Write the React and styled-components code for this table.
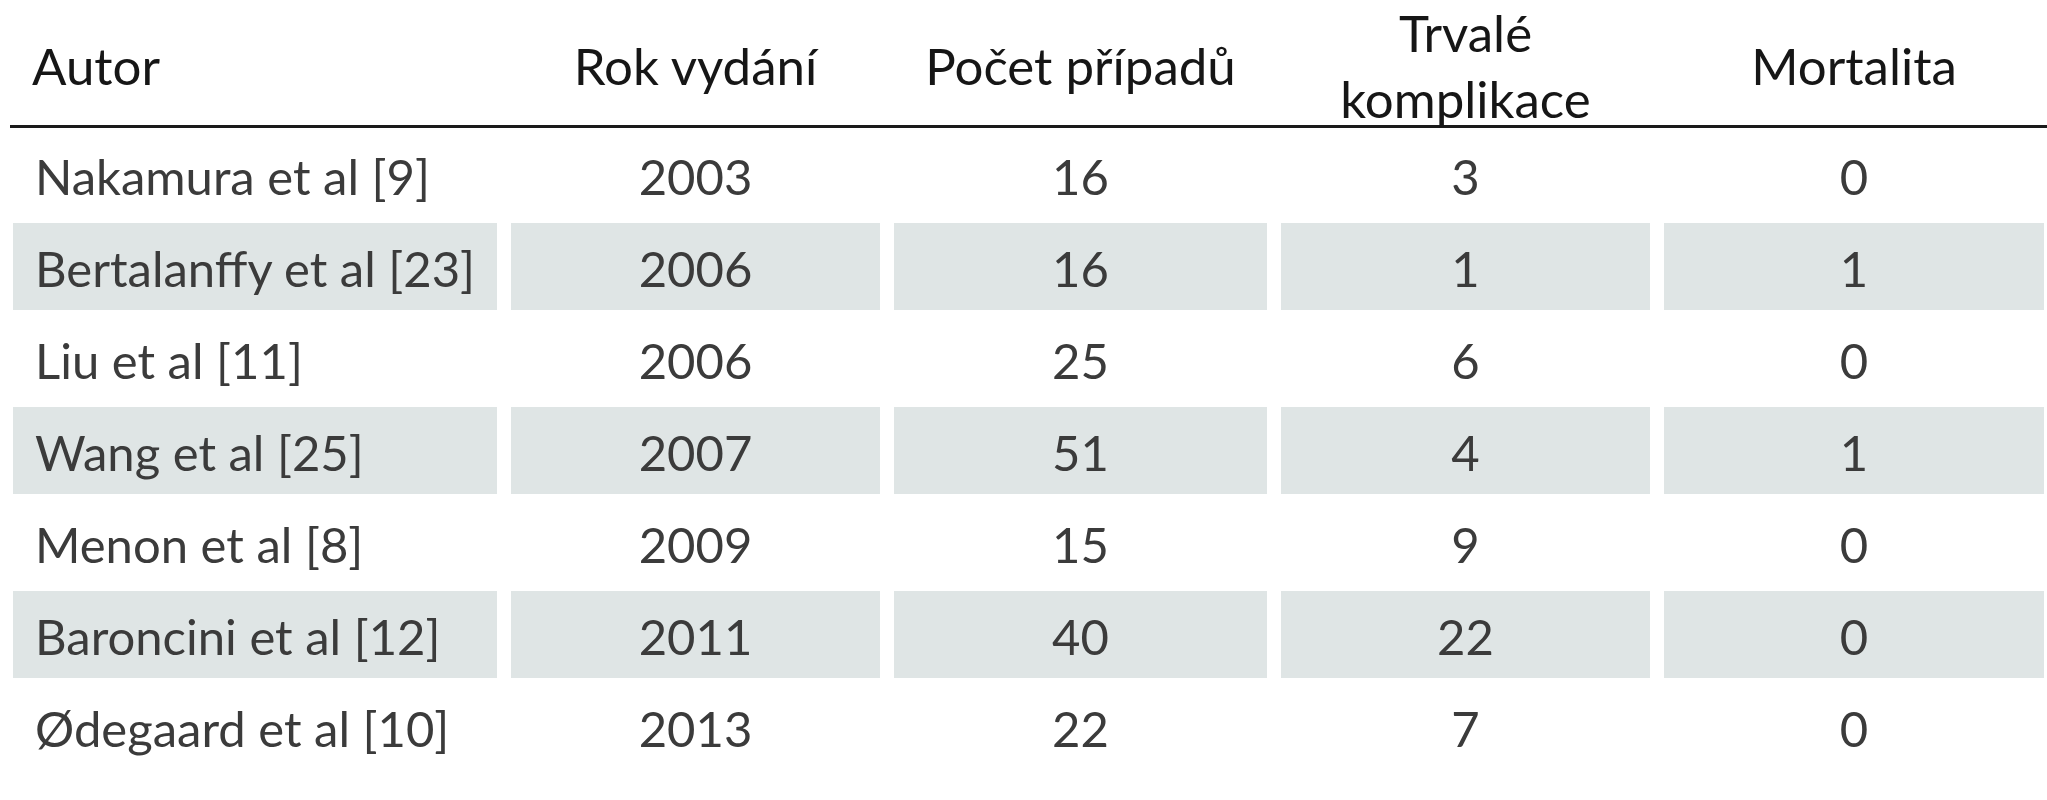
import React from 'react';
import styled, { createGlobalStyle } from 'styled-components';

const GlobalStyle = createGlobalStyle`
    body {
        margin: 0;
        background: #ffffff;
        font-family: Lato, "Open Sans", "Noto Sans", sans-serif;
    }
`;

const COLUMNS = '484px 369px 373px 369px 380px';

const Table = styled.div`
    margin-left: 10px;
    width: 2037px;
`;

const HeaderRow = styled.div`
    display: grid;
    grid-template-columns: ${COLUMNS};
    column-gap: 14px;
    height: 128px;
    padding: 0 0 8px 3px;
    box-sizing: border-box;
    border-bottom: 3px solid #1a1a1a;
`;

const HeaderCell = styled.div`
    display: flex;
    align-items: center;
    justify-content: ${props => props.left ? 'flex-start' : 'center'};
    padding-left: ${props => props.left ? '19px' : '0'};
    text-align: center;
    font-size: 51px;
    line-height: 66px;
    color: #161616;
`;

const Body = styled.div`
    display: flex;
    flex-direction: column;
    gap: 5px;
    padding: 3px 0 0 3px;
`;

const Row = styled.div`
    display: grid;
    grid-template-columns: ${COLUMNS};
    column-gap: 14px;
    height: 87px;
`;

const Cell = styled.div`
    display: flex;
    align-items: center;
    justify-content: ${props => props.left ? 'flex-start' : 'center'};
    padding-left: ${props => props.left ? '22px' : '0'};
    padding-top: 3px;
    box-sizing: border-box;
    background: ${props => props.shaded ? '#dfe5e5' : 'transparent'};
    font-size: 49px;
    line-height: 1.2;
    color: #3b3b3b;
`;

const rows = [
    ['Nakamura et al [9]', '2003', '16', '3', '0'],
    ['Bertalanffy et al [23]', '2006', '16', '1', '1'],
    ['Liu et al [11]', '2006', '25', '6', '0'],
    ['Wang et al [25]', '2007', '51', '4', '1'],
    ['Menon et al [8]', '2009', '15', '9', '0'],
    ['Baroncini et al [12]', '2011', '40', '22', '0'],
    ['Ødegaard et al [10]', '2013', '22', '7', '0'],
];

const App = () => {
    return (
        <>
            <GlobalStyle />
            <Table>
                <HeaderRow>
                    <HeaderCell left>Autor</HeaderCell>
                    <HeaderCell>Rok vydání</HeaderCell>
                    <HeaderCell>Počet případů</HeaderCell>
                    <HeaderCell>Trvalé<br />komplikace</HeaderCell>
                    <HeaderCell>Mortalita</HeaderCell>
                </HeaderRow>
                <Body>
                    {rows.map((row, i) => (
                        <Row key={row[0]}>
                            {row.map((value, j) => (
                                <Cell key={j} left={j === 0} shaded={i % 2 === 1}>
                                    {value}
                                </Cell>
                            ))}
                        </Row>
                    ))}
                </Body>
            </Table>
        </>
    );
};

export default App;
